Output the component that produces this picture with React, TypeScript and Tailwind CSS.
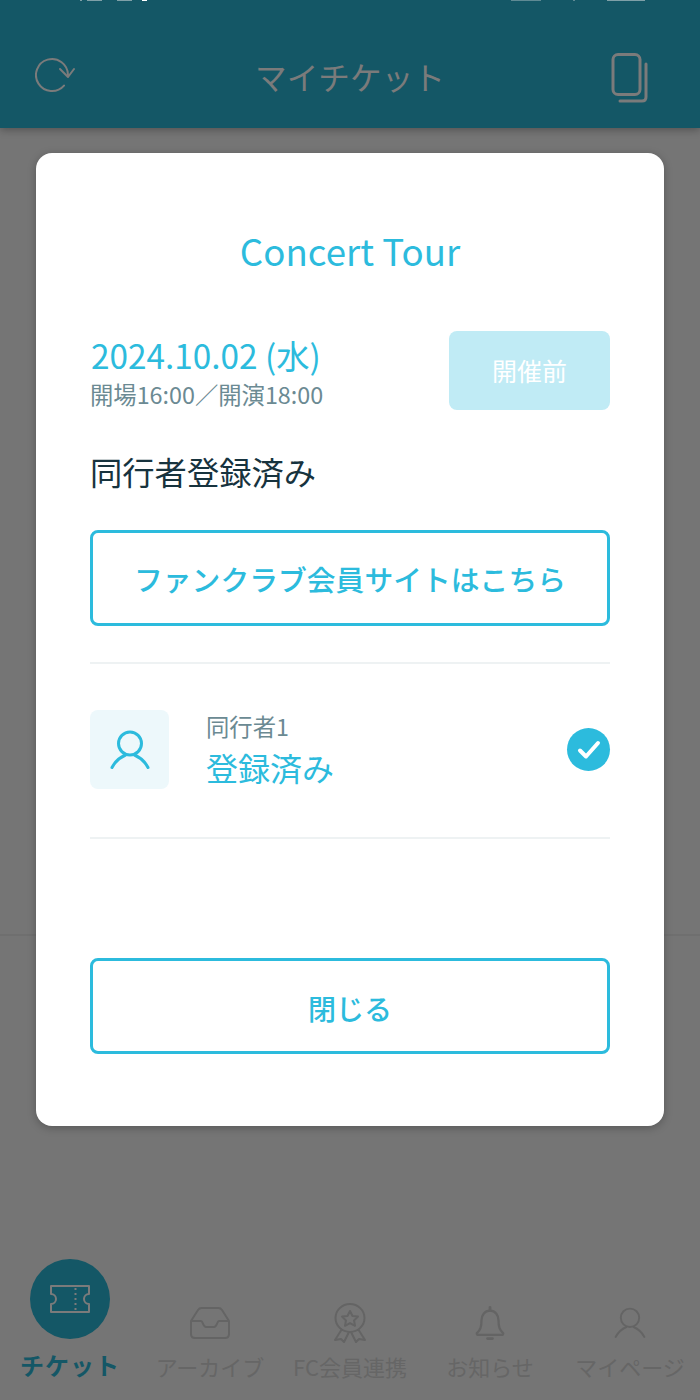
import React from "react";

const font = { fontFamily: '"Noto Sans CJK JP", "Noto Sans", sans-serif' };

function Person({ className, sw = 2 }: { className: string; sw?: number }) {
  return (
    <svg viewBox="0 0 40 40" className={className} fill="none" stroke="currentColor" strokeWidth={sw} strokeLinecap="round">
      <circle cx="20" cy="13.500" r="11.500" />
      <path d="M2 37.500C6 30 12 26.500 15.500 25M38 37.500C34 30 28 26.500 24.500 25" />
    </svg>
  );
}

function NavItem({ label, children }: { label: string; children: React.ReactNode }) {
  return (
    <div className="flex flex-col items-center w-[140px]">
      <div className="h-[42px] flex items-center justify-center text-[#646464]">{children}</div>
      <div className="mt-[8px] text-[22px] leading-[28px] text-[#666666] whitespace-nowrap">{label}</div>
    </div>
  );
}

export default function App() {
  return (
    <div style={font} className="relative w-[700px] h-[1400px] overflow-hidden bg-[#757575]">
      <div className="relative h-[128px] bg-[#145766] shadow-[0_2px_8px_rgba(0,0,0,0.3)] flex items-center justify-between pl-[35px] pr-[51px] pt-[28px]">
        <div className="absolute left-0 right-0 top-0 h-[2px] overflow-hidden flex items-start pl-[80px] pr-[55px] justify-between">
          <div className="flex gap-[5px]">
            <div className="w-[2px] h-[1px] bg-[#7fa0a8]" />
            <div className="w-[15px] h-[1px] bg-[#7fa0a8]" />
            <div className="w-[15px] h-[1px] ml-[10px] bg-[#7fa0a8]" />
            <div className="w-[5px] h-[1px] bg-white ml-[5px]" />
          </div>
          <div className="flex gap-[6px]">
            <div className="w-[30px] h-[1px] bg-[#5f8a94]" />
            <div className="w-[2px] h-[1px] ml-[26px] bg-[#5f8a94]" />
            <div className="w-[38px] h-[1px] ml-[26px] bg-[#7fa0a8]" />
          </div>
        </div>
        <svg viewBox="0 0 40 36" className="w-[40px] h-[36px] -translate-y-[3px] text-[#7b7b7b]" fill="none" stroke="currentColor" strokeWidth="2" strokeLinecap="round" strokeLinejoin="round">
          <path d="M29 28.600A16 16 0 1 1 33 18" />
          <path d="M25 12l8 8 6-8" />
        </svg>
        <div className="text-[31.670px] leading-[40px] font-normal text-[#7b7b7b] translate-x-[7px] -translate-y-[2px]">マイチケット</div>
        <svg viewBox="0 0 38 50" className="w-[38px] h-[50px] text-[#7b7b7b]" fill="none" stroke="currentColor" strokeLinejoin="round">
          <rect x="2" y="1.500" width="27" height="40" rx="5" strokeWidth="3" />
          <path d="M35 11v33c0 2.500-1.500 4-4 4H9" strokeWidth="3" strokeLinecap="round" />
        </svg>
      </div>

      <div className="absolute left-0 right-0 top-[934px] h-[2px] bg-[#6f6f6f]" />

      <div className="absolute left-0 right-0 bottom-0 h-[141px]">
        <div className="absolute left-[30px] top-0 w-[80px] h-[80px] rounded-full bg-[#145766] flex items-center justify-center">
          <svg viewBox="0 0 40 28" className="w-[40px] h-[28px] text-[#7b7b7b]" fill="none" stroke="currentColor" strokeWidth="2">
            <path d="M1 1h38v8a5 5 0 0 0 0 10v8H1v-8a5 5 0 0 0 0-10z" strokeLinejoin="round" />
            <path d="M25.500 3v22" strokeDasharray="2 3" />
          </svg>
        </div>
        <div className="absolute left-0 top-[89px] w-[140px] text-center text-[24px] leading-[34px] font-bold text-[#145766] tracking-[1px]">チケット</div>
        <div className="absolute left-[140px] right-0 top-[43px] flex">
          <div className="flex justify-between w-[560px]">
            <NavItem label="アーカイブ">
              <svg viewBox="0 0 40 32" className="w-[40px] h-[32px]" fill="none" stroke="currentColor" strokeWidth="2" strokeLinejoin="round">
                <path d="M1 14L8 3c1-1.500 2-2 3.500-2h17c1.500 0 2.500.5 3.500 2l7 11v13c0 2.500-1.500 4-4 4H5c-2.500 0-4-1.500-4-4z" />
                <path d="M1 14h10c2 0 2 6 5 6h8c3 0 3-6 5-6h10" />
              </svg>
            </NavItem>
            <NavItem label="FC会員連携">
              <svg viewBox="0 0 34 40" className="w-[34px] h-[40px]" fill="none" stroke="currentColor" strokeWidth="2" strokeLinejoin="round">
                <ellipse cx="17" cy="15" rx="14.500" ry="14" />
                <path d="M17 8l2.500 5 5.500.6-4 3.800 1 5.400-5-2.700-5 2.700 1-5.400-4-3.800 5.500-.6z" />
                <path d="M9 26L2 37l6-1 3 3 5-10" />
                <path d="M25 26l7 11-6-1-3 3-5-10" />
              </svg>
            </NavItem>
            <NavItem label="お知らせ">
              <svg viewBox="0 0 32 36" className="w-[32px] h-[34px]" fill="none" stroke="currentColor" strokeWidth="2.400" strokeLinejoin="round" strokeLinecap="round">
                <path d="M16 5c-6 0-9 5-9 10 0 7-1 10-5 14 0 1 .5 1.500 2 1.500h24c1.500 0 2-.5 2-1.500-4-4-5-7-5-14 0-5-3-10-9-10z" />
                <path d="M16 1.500v3" strokeWidth="3" />
                <path d="M13.500 34.500h5" strokeWidth="3" />
              </svg>
            </NavItem>
            <NavItem label="マイページ">
              <Person className="w-[34px] h-[32px]" sw={2.400} />
            </NavItem>
          </div>
        </div>
      </div>

      <div className="absolute inset-0 flex justify-center items-start pt-[153px]">
        <div className="w-[628px] h-[973px] rounded-[16px] bg-white shadow-[0_2px_8px_rgba(0,0,0,0.25)] px-[54px] pt-[74px] flex flex-col">
          <div className="text-center text-[36.670px] leading-[52px] text-[#2cbbdd] -mt-[3px]">Concert Tour</div>

          <div className="mt-[55px] flex justify-between items-start">
            <div>
              <div className="text-[33.330px] leading-[46px] text-[#2cbbdd] pl-[1px] pt-[1px] whitespace-nowrap">2024.10.02 (水)</div>
              <div className="text-[23.330px] leading-[30px] mt-[1px] text-[#6b8a93] whitespace-nowrap">開場16:00／開演18:00</div>
            </div>
            <div className="w-[161px] h-[79px] rounded-[8px] bg-[#c0ebf5] flex items-center justify-center text-[25px] text-white">開催前</div>
          </div>

          <div className="mt-[38px] text-[32.300px] leading-[46px] font-normal text-[#17333e]">同行者登録済み</div>

          <div className="mt-[36px] h-[96px] pt-[2px] rounded-[8px] border-[3px] border-[#2cbbdd] flex items-center justify-center text-[28.800px] font-medium text-[#2cbbdd]">ファンクラブ会員サイトはこちら</div>

          <div className="mt-[36px] h-[2px] bg-[#eef2f3]" />

          <div className="h-[173px] flex items-center -mt-[1px]">
            <div className="w-[79px] h-[79px] rounded-[8px] bg-[#edf8fb] flex items-center justify-center text-[#2cbbdd]">
              <Person className="w-[40px] h-[40px]" sw={3} />
            </div>
            <div className="ml-[37px] flex-1">
              <div className="text-[23.330px] leading-[32px] text-[#6b8a93]">同行者1</div>
              <div className="text-[32px] leading-[46px] mt-[2px] text-[#2cbbdd]">登録済み</div>
            </div>
            <div className="w-[43px] h-[43px] rounded-full bg-[#2cbbdd] flex items-center justify-center">
              <svg viewBox="0 0 24 20" className="w-[24px] h-[20px]" fill="none" stroke="white" strokeWidth="4" strokeLinecap="round" strokeLinejoin="round">
                <path d="M3 10.500l6 6L21 3" />
              </svg>
            </div>
          </div>

          <div className="mt-[1px] h-[2px] bg-[#eef2f3]" />

          <div className="mt-[119px] h-[96px] pt-[3px] rounded-[8px] border-[3px] border-[#2cbbdd] flex items-center justify-center text-[28px] font-medium text-[#2cbbdd]">閉じる</div>
        </div>
      </div>
    </div>
  );
}
